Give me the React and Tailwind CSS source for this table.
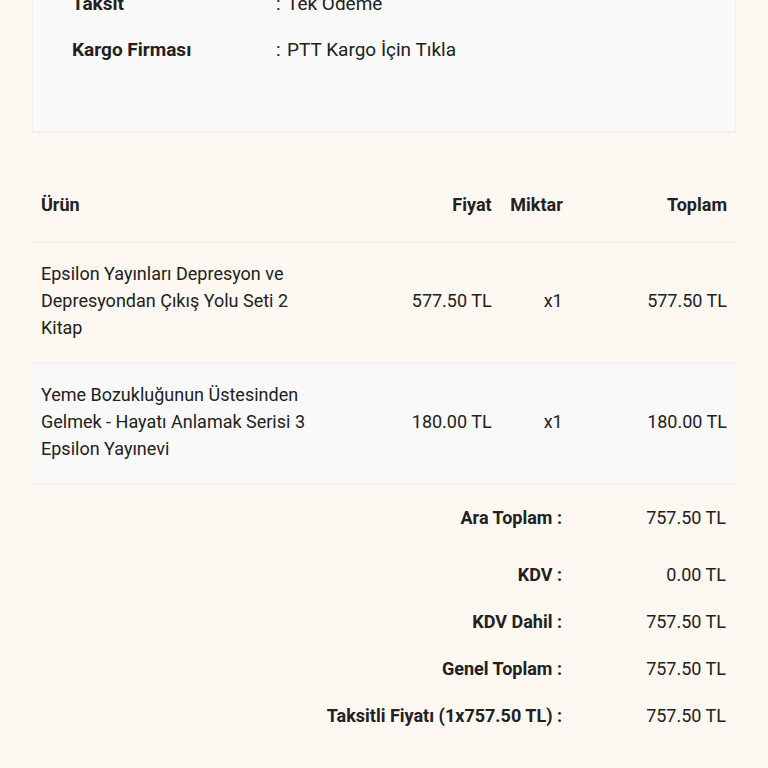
import React from 'react';

const info = [
  { label: 'Taksit', value: 'Tek Ödeme' },
  { label: 'Kargo Firması', value: 'PTT Kargo İçin Tıkla' },
];

const items = [
  {
    id: 1,
    name: 'Epsilon Yayınları Depresyon ve Depresyondan Çıkış Yolu Seti 2 Kitap',
    price: '577.50 TL',
    qty: 'x1',
    total: '577.50 TL',
  },
  {
    id: 2,
    name: 'Yeme Bozukluğunun Üstesinden Gelmek - Hayatı Anlamak Serisi 3 Epsilon Yayınevi',
    price: '180.00 TL',
    qty: 'x1',
    total: '180.00 TL',
  },
];

const totals = [
  { label: 'Ara Toplam :', value: '757.50 TL' },
  { label: 'KDV :', value: '0.00 TL' },
  { label: 'KDV Dahil :', value: '757.50 TL' },
  { label: 'Genel Toplam :', value: '757.50 TL' },
  { label: 'Taksitli Fiyatı (1x757.50 TL) :', value: '757.50 TL' },
];

export default function App() {
  return (
    <div
      className="min-h-screen bg-[#fdf8f2] text-[#212121] text-[18px] leading-[27px] overflow-hidden"
      style={{ fontFamily: 'Roboto, "Liberation Sans", sans-serif' }}
    >
      <div className="px-8 mt-[-20px]">
        {/* siparis bilgileri */}
        <div className="bg-[#fafafa] border-x border-b-2 border-[#f1eeeb] pl-[39px] pr-10 pb-[59px] text-[19px]">
          {info.map((row) => (
            <div key={row.label} className="flex items-center h-[46px]">
              <div className="w-[204px] font-bold">{row.label}</div>
              <div className="flex">
                <span className="w-[11px]">:</span>
                <span>{row.value}</span>
              </div>
            </div>
          ))}
        </div>

        {/* urunler */}
        <table className="w-full table-fixed mt-[33px] border-collapse">
          <colgroup>
            <col className="w-[318px]" />
            <col className="w-[150px]" />
            <col className="w-[71px]" />
            <col className="w-[164px]" />
          </colgroup>
          <thead>
            <tr>
              <th className="text-left font-bold px-[9px] pt-[25px] pb-[23px]">Ürün</th>
              <th className="text-right font-bold px-[9px] pt-[25px] pb-[23px]">Fiyat</th>
              <th className="text-right font-bold px-[9px] pt-[25px] pb-[23px]">Miktar</th>
              <th className="text-right font-bold px-[9px] pt-[25px] pb-[23px]">Toplam</th>
            </tr>
          </thead>
          <tbody>
            {items.map((item, i) => (
              <tr
                key={item.id}
                className={`border-t-2 border-b-2 border-[#f3f0ed] ${i % 2 === 1 ? 'bg-[#f9f9f9]' : ''}`}
              >
                <td className="px-[9px] pt-[17px] pb-[21px] pr-[20px]">{item.name}</td>
                <td className="px-[9px] pt-[17px] pb-[21px] text-right">{item.price}</td>
                <td className="px-[9px] pt-[17px] pb-[21px] text-right">{item.qty}</td>
                <td className="px-[9px] pt-[17px] pb-[21px] text-right">{item.total}</td>
              </tr>
            ))}
          </tbody>
        </table>

        {/* toplamlar */}
        <div className="pt-[9px]">
          {totals.map((t, i) => (
            <div key={t.label} className={`flex items-center h-[47px] ${i === 0 ? 'mb-[10px]' : ''}`}>
              <div className="w-[539px] pr-[9px] text-right font-bold">{t.label}</div>
              <div className="w-[164px] pr-[9px] text-right">{t.value}</div>
            </div>
          ))}
        </div>
      </div>
    </div>
  );
}
